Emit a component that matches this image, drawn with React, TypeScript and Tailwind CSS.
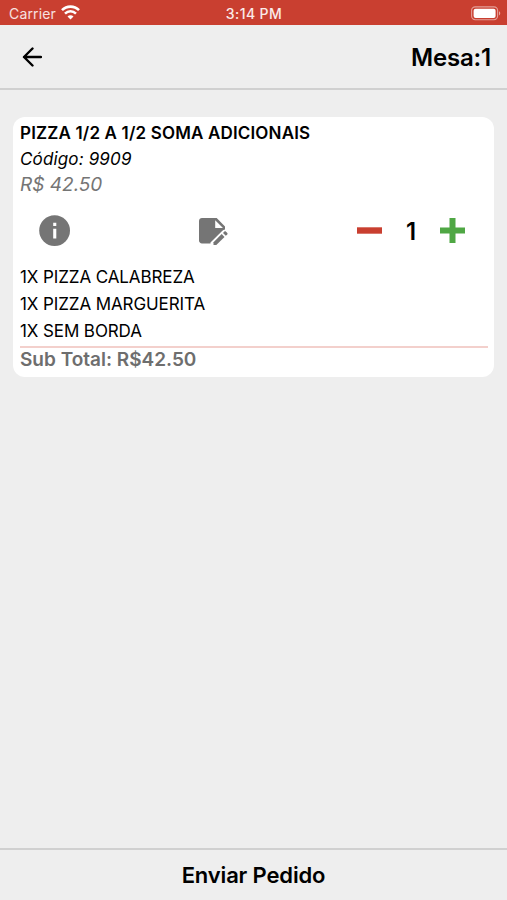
import React, { useState } from "react";

interface IOrderItem {
    name: string;
    code: string;
    price: number;
    options: string[];
}

const item: IOrderItem = {
    name: "PIZZA 1/2 A 1/2 SOMA ADICIONAIS",
    code: "9909",
    price: 42.5,
    options: ["1X PIZZA CALABREZA", "1X PIZZA MARGUERITA", "1X SEM BORDA"],
};

const WifiIcon = () => (
    <svg width="19" height="15" viewBox="0 0 19 15" fill="none" stroke="#fff" strokeWidth="2.6">
        <path d="M1 5.2C5.8 0.4 13.2 0.4 18 5.2" />
        <path d="M4 8.6C7.2 5.5 11.8 5.5 15 8.6" />
        <path d="M9.5 14.5L6.5 11.5C8.2 9.9 10.8 9.9 12.5 11.5Z" fill="#fff" stroke="none" />
    </svg>
);

const BatteryIcon = () => (
    <svg width="30" height="15" viewBox="0 0 30 15">
        <rect x="0.6" y="0.9" width="26" height="12.8" rx="3.6" fill="none" stroke="#fff" strokeOpacity="0.5" strokeWidth="1.1" />
        <rect x="2.6" y="2.8" width="22" height="9.2" rx="2" fill="#fff" />
        <path d="M28 5.2C29.7 5.8 29.7 8.8 28 9.4Z" fill="#fff" fillOpacity="0.55" />
    </svg>
);

const BackIcon = () => (
    <svg width="20" height="20" viewBox="0 0 20 20" fill="none" stroke="#000" strokeWidth="2.4" strokeLinecap="round" strokeLinejoin="round">
        <path d="M10.5 1.5L2 10L10.5 18.5M2 10H19" />
    </svg>
);

const InfoIcon = () => (
    <svg width="32" height="32" viewBox="0 0 32 32">
        <circle cx="15.6" cy="15.6" r="15.4" fill="#757575" />
        <path d="M14.2 7.8H17.3V10.9H14.2ZM14.2 13.7H17.3V23.4H14.2Z" fill="#fff" />
    </svg>
);

const NoteEditIcon = () => (
    <svg width="30" height="28" viewBox="0 0 30 28" fill="#757575">
        <path fillRule="evenodd" d="M3 0H17.7L26 8.5V11.6C24.9 11.7 23.9 12.2 23.1 13L11.5 24.4V25.5H3C1.3 25.5 0 24.2 0 22.6V2.9C0 1.3 1.3 0 3 0ZM16.2 2.2V10H24Z" />
        <path d="M22.7 16.1L25.5 18.9L17.3 27H14.5V24.2Z" />
        <path d="M26.8 17.8L24 15L25.4 13.6C25.8 13.2 26.4 13.2 26.8 13.6L28.3 15.1C28.7 15.5 28.7 16 28.3 16.4Z" />
    </svg>
);

const App = () => {
    const [quantity, setQuantity] = useState<number>(1);

    return (
        <div className="flex h-screen w-full flex-col overflow-hidden bg-[#eeeeee] font-['Inter',sans-serif] text-black">
            <div className="grid h-[25px] shrink-0 grid-cols-3 items-center bg-[#c93f30] pr-[6px] pl-[9px] text-white">
                <div className="flex items-center gap-[5px]">
                    <span className="pt-[2px] text-[14px] leading-none tracking-[0.15px] text-white/85">Carrier</span>
                    <WifiIcon />
                </div>
                <span className="pt-[3px] pr-[2px] text-center text-[14px] leading-none font-medium tracking-[0.4px] text-white/90">3:14 PM</span>
                <div className="flex justify-end pt-px"><BatteryIcon /></div>
            </div>

            <header className="flex h-[65px] shrink-0 items-center justify-between border-b-2 border-[#d0d0d0] pr-[16px] pl-[22px]">
                <button aria-label="Voltar"><BackIcon /></button>
                <h1 className="pt-[2px] text-[24px] leading-none font-semibold tracking-[-0.2px]">Mesa:1</h1>
            </header>

            <main className="flex-1 px-[13px] pt-[26.5px]">
                <div className="h-[260px] rounded-[12px] bg-white pt-[3.5px] pr-[6px] pl-[7px]">
                    <h2 className="text-[17px] leading-[26px] font-semibold tracking-[0.16px] whitespace-nowrap">{item.name}</h2>
                    <p className="pt-px text-[17px] leading-[25px] tracking-[0.15px] italic">Código: {item.code}</p>
                    <p className="text-[19px] leading-[26px] text-[#757575] italic">R$ {item.price.toFixed(2)}</p>

                    <div className="flex h-[66px] items-center pl-[19px]">
                        <button aria-label="Detalhes"><InfoIcon /></button>
                        <button aria-label="Editar" className="ml-[128px] pt-px"><NoteEditIcon /></button>
                        <div className="ml-[128px] flex items-center">
                            <button aria-label="Remover" className="pb-px" onClick={() => setQuantity(Math.max(0, quantity - 1))}>
                                <svg width="25" height="25" viewBox="0 0 25 25"><path d="M0 9.3H25V15.7H0Z" fill="#c93f30" /></svg>
                            </button>
                            <span className="w-[58px] pt-px text-center text-[24px] leading-none font-semibold">{quantity}</span>
                            <button aria-label="Adicionar" className="pb-px" onClick={() => setQuantity(quantity + 1)}>
                                <svg width="25" height="25" viewBox="0 0 25 25"><path d="M9.5 0H15.5V9.5H25V15.5H15.5V25H9.5V15.5H0V9.5H9.5Z" fill="#4fa744" /></svg>
                            </button>
                        </div>
                    </div>

                    <ul>
                        {item.options.map((option) => (
                            <li key={option} className="text-[17px] leading-[27px] tracking-[-0.1px]">{option}</li>
                        ))}
                    </ul>
                    <div className="mt-px border-t-2 border-[#f3d0cc] text-[19px] leading-[23px] font-semibold text-[#6e6e6e]">
                        Sub Total: R${item.price.toFixed(2)}
                    </div>
                </div>
            </main>

            <button className="h-[52px] shrink-0 border-t-2 border-[#d0d0d0] text-[22px] leading-none font-semibold tracking-[-0.15px]">
                Enviar Pedido
            </button>
        </div>
    );
};

export default App;
